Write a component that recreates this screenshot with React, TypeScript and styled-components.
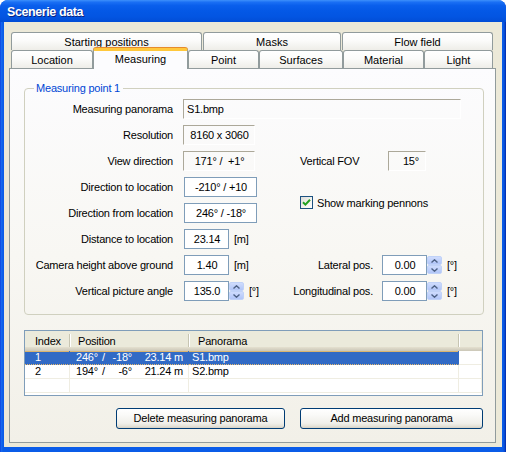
import React from "react";
import styled, { createGlobalStyle, css } from "styled-components";

const Global = createGlobalStyle`
  html, body { margin: 0; padding: 0; background: #ffffff; }
  body {
    font-family: "Liberation Sans", Arial, sans-serif;
    font-size: 11px;
    letter-spacing: -0.2px;
    color: #000;
  }
  * { box-sizing: border-box; }
`;

const Window = styled.div`
  width: 506px;
  height: 452px;
  display: flex;
  flex-direction: column;
  border-radius: 8px 8px 0 0;
  overflow: hidden;
  background: linear-gradient(
    to right,
    #0831d9 0,
    #1a6cf0 1px,
    #0a5ce8 3px,
    #0a5ce8 calc(100% - 3px),
    #0645cc calc(100% - 1px),
    #0020a0 100%
  );
`;

const TitleBar = styled.div`
  flex: none;
  height: 22px;
  display: flex;
  align-items: center;
  padding: 1px 0 0 7px;
  background: linear-gradient(
    180deg,
    #3d90fb 0%,
    #1a6ff4 10%,
    #0a5fec 25%,
    #0458e6 50%,
    #0355e2 75%,
    #024dd6 100%
  );
`;

const Title = styled.span`
  color: #ffffff;
  font-weight: bold;
  font-size: 12.5px;
  letter-spacing: -0.4px;
  text-shadow: 1px 1px 0 #0a2480;
`;

const Body = styled.div`
  flex: 1;
  margin: 0 4px 5px 4px;
  background: #ece9d8;
  padding: 10px 6px 4px 5px;
  display: flex;
  flex-direction: column;
`;

const TabStrip = styled.div`
  display: flex;
  flex-direction: column;
  padding-left: 2px;
`;

const TabRow = styled.div<{ $gap: number }>`
  display: flex;
  gap: ${(p) => p.$gap}px;
  height: 18px;
  align-items: flex-start;
`;

const Tab = styled.div<{ $w: number; $active?: boolean }>`
  flex: none;
  width: ${(p) => p.$w}px;
  height: 18px;
  display: flex;
  align-items: center;
  justify-content: center;
  border: 1px solid #919b9c;
  border-bottom: none;
  border-radius: 3px 3px 0 0;
  background: linear-gradient(180deg, #ffffff 0%, #fbfbfa 45%, #eeede8 100%);
  white-space: nowrap;
  letter-spacing: 0;
  ${(p) =>
    p.$active &&
    css`
      position: relative;
      z-index: 1;
      height: 21px;
      margin-top: -2px;
      padding-bottom: 3px;
      border-top: 3px solid #ffc83c;
      box-shadow: 0 -1px 0 #e68b2c;
      background: #fcfcfe;
    `}
`;

const Panel = styled.div`
  flex: 1;
  display: flex;
  flex-direction: column;
  border: 1px solid #919b9c;
  background: linear-gradient(180deg, #fcfcfe 0%, #f8f7f3 50%, #f2f0e8 100%);
  padding: 12px 11px 12px 14px;
`;

const Group = styled.fieldset`
  margin: 0;
  padding: 0 0 13px 0;
  min-width: 0;
  border: 1px solid #d0d0bf;
  border-radius: 4px;
`;

const Legend = styled.legend`
  margin-left: 9px;
  padding: 0 3px 0 2px;
  line-height: 14px;
  color: #0046d5;
`;

const FormGrid = styled.div`
  display: grid;
  grid-template-columns: 148px 97px 1fr;
  grid-auto-rows: 20px;
  column-gap: 10px;
  row-gap: 6px;
  padding-top: 4px;
`;

const Label = styled.div`
  display: flex;
  align-items: center;
  justify-content: flex-end;
  white-space: nowrap;
`;

const Cell = styled.div<{ $span?: number; $indent?: number }>`
  display: flex;
  align-items: center;
  white-space: nowrap;
  min-width: 0;
  ${(p) => p.$span && css`grid-column: span ${p.$span};`}
  padding-left: ${(p) => p.$indent ?? 0}px;
`;

const CheckCell = styled.label`
  grid-row: span 2;
  align-self: end;
  display: flex;
  align-items: center;
  gap: 4px;
  margin: 0 0 14px 10px;
  white-space: nowrap;
`;

const SideLabel = styled.span<{ $w: number; $right?: boolean }>`
  flex: none;
  width: ${(p) => p.$w}px;
  text-align: ${(p) => (p.$right ? "right" : "left")};
  margin-right: ${(p) => (p.$right ? 8 : 0)}px;
  white-space: nowrap;
`;

type Align = "left" | "center" | "right";

const Field = styled.div<{ $w: number; $kind: "ro" | "edit"; $align?: Align }>`
  flex: none;
  width: ${(p) => p.$w}px;
  height: 20px;
  display: flex;
  align-items: center;
  justify-content: ${(p) =>
    p.$align === "left" ? "flex-start" : p.$align === "right" ? "flex-end" : "center"};
  padding: 0 ${(p) => (p.$align === "right" ? 6 : 2)}px 0 3px;
  white-space: pre;
  ${(p) =>
    p.$kind === "edit"
      ? css`
          margin-left: 1px;
          border: 1px solid #7f9db9;
          background: #ffffff;
        `
      : css`
          border: 1px solid;
          border-color: #aca899 #ffffff #ffffff #aca899;
          background: transparent;
        `}
`;

const Unit = styled.span`
  margin-left: 5px;
`;

const SpinBox = styled.div`
  flex: none;
  width: 15px;
  height: 20px;
  display: flex;
  flex-direction: column;
  padding: 1px 0;
`;

const SpinHalf = styled.div`
  flex: 1;
  display: flex;
  align-items: center;
  justify-content: center;
  border-radius: 2px;
  background: linear-gradient(180deg, #cfdcfd 0%, #bccefa 60%, #b1c5f7 100%);
  border: 1px solid #c0d2f8;
`;

const Arrow = ({ up }: { up?: boolean }) => (
  <svg width="7" height="4" viewBox="0 0 7 4">
    <polyline
      points={up ? "0.5,3.5 3.5,0.8 6.5,3.5" : "0.5,0.5 3.5,3.2 6.5,0.5"}
      fill="none"
      stroke="#4d6185"
      strokeWidth="1.4"
    />
  </svg>
);

const Spinner = () => (
  <SpinBox>
    <SpinHalf>
      <Arrow up />
    </SpinHalf>
    <SpinHalf>
      <Arrow />
    </SpinHalf>
  </SpinBox>
);

const CheckBox = styled.span`
  flex: none;
  width: 13px;
  height: 13px;
  display: flex;
  align-items: center;
  justify-content: center;
  border: 1px solid #1c5180;
  background: linear-gradient(135deg, #dcdcd7 0%, #f4f4f0 60%, #ffffff 100%);
`;

const CheckMark = () => (
  <svg width="9" height="9" viewBox="0 0 9 9">
    <polyline
      points="1,4.2 3.4,6.6 8,1.8"
      fill="none"
      stroke="#21a121"
      strokeWidth="2"
    />
  </svg>
);

const COLS = "45px 119px 270px 1fr";

const List = styled.div`
  margin-top: 15px;
  margin-right: 1px;
  height: 66px;
  border: 1px solid #7f9db9;
  background: #ffffff;
`;

const HeaderRow = styled.div`
  display: grid;
  grid-template-columns: ${COLS};
  height: 20px;
  background: linear-gradient(
    180deg,
    #ebeadb 0%,
    #ebeadb 82%,
    #e2decd 82%,
    #d6d2c2 91%,
    #cbc7b8 100%
  );
`;

const HeaderCell = styled.div<{ $pad: number; $sep?: boolean }>`
  position: relative;
  display: flex;
  align-items: center;
  padding-left: ${(p) => p.$pad}px;
  padding-bottom: 1px;
  white-space: nowrap;
  ${(p) =>
    p.$sep &&
    css`
      &::after {
        content: "";
        position: absolute;
        right: 0;
        top: 3px;
        bottom: 4px;
        width: 1px;
        background: #c7c5b2;
        box-shadow: 1px 0 0 #ffffff;
      }
    `}
`;

const DataRow = styled.div<{ $sel?: boolean }>`
  display: grid;
  grid-template-columns: ${COLS};
  height: 14px;
`;

const DataCell = styled.div<{ $pad: number; $sel?: boolean }>`
  display: flex;
  align-items: center;
  padding-left: ${(p) => p.$pad}px;
  padding-right: 5px;
  white-space: pre;
  border-right: 1px solid #efede2;
  border-bottom: 1px solid #efede2;
  line-height: 13px;
  ${(p) =>
    p.$sel &&
    css`
      background: #316ac5;
      color: #ffffff;
      border-right-color: #316ac5;
      border-bottom: 1px dotted #e7b96e;
      box-shadow: inset 0 1px 0 #d9b470;
    `}
`;

const Az = styled.span`
  width: 26px;
  flex: none;
`;
const Slash = styled.span`
  width: 6px;
  flex: none;
`;
const El = styled.span`
  width: 24px;
  flex: none;
  text-align: right;
`;
const Dist = styled.span`
  flex: 1;
  text-align: right;
`;

const ButtonRow = styled.div`
  display: flex;
  justify-content: flex-end;
  gap: 15px;
  margin: 12px 1px 0 0;
`;

const Button = styled.button<{ $w: number }>`
  width: ${(p) => p.$w}px;
  height: 21px;
  padding: 0 0 1px 0;
  font: inherit;
  letter-spacing: inherit;
  color: #000;
  border: 1px solid #003c74;
  border-radius: 3px;
  background: linear-gradient(
    180deg,
    #ffffff 0%,
    #fafaf8 30%,
    #f0efea 75%,
    #e5e2d8 90%,
    #d6d0c5 100%
  );
`;

type Row = {
  index: string;
  az: string;
  el: string;
  dist: string;
  pano: string;
  sel?: boolean;
};

const rows: Row[] = [
  { index: "1", az: "246°", el: "-18°", dist: "23.14 m", pano: "S1.bmp", sel: true },
  { index: "2", az: "194°", el: "-6°", dist: "21.24 m", pano: "S2.bmp" },
  { index: "", az: "", el: "", dist: "", pano: "" },
];

const backTabs = [
  { label: "Starting positions", w: 191 },
  { label: "Masks", w: 138 },
  { label: "Flow field", w: 151 },
];

const frontTabs = [
  { label: "Location", w: 82 },
  { label: "Measuring", w: 95, active: true },
  { label: "Point", w: 71 },
  { label: "Surfaces", w: 84 },
  { label: "Material", w: 81 },
  { label: "Light", w: 69 },
];

export default function App() {
  return (
    <>
      <Global />
      <Window>
        <TitleBar>
          <Title>Scenerie data</Title>
        </TitleBar>
        <Body>
          <TabStrip>
            <TabRow $gap={1}>
              {backTabs.map((t) => (
                <Tab key={t.label} $w={t.w}>
                  {t.label}
                </Tab>
              ))}
            </TabRow>
            <TabRow $gap={0}>
              {frontTabs.map((t) => (
                <Tab key={t.label} $w={t.w} $active={t.active}>
                  {t.label}
                </Tab>
              ))}
            </TabRow>
          </TabStrip>
          <Panel>
            <Group>
              <Legend>Measuring point 1</Legend>
              <FormGrid>
                <Label>Measuring panorama</Label>
                <Cell $span={2}>
                  <Field $w={278} $kind="ro" $align="left">
                    S1.bmp
                  </Field>
                </Cell>

                <Label>Resolution</Label>
                <Cell>
                  <Field $w={72} $kind="ro">
                    8160 x 3060
                  </Field>
                </Cell>
                <Cell />

                <Label>View direction</Label>
                <Cell>
                  <Field $w={72} $kind="ro">
                    {"171° /  +1°"}
                  </Field>
                </Cell>
                <Cell $indent={10}>
                  <SideLabel $w={88}>Vertical FOV</SideLabel>
                  <Field $w={38} $kind="ro" $align="right">
                    15°
                  </Field>
                </Cell>

                <Label>Direction to location</Label>
                <Cell>
                  <Field $w={73} $kind="edit">
                    {"-210° / +10"}
                  </Field>
                </Cell>
                <CheckCell>
                  <CheckBox>
                    <CheckMark />
                  </CheckBox>
                  Show marking pennons
                </CheckCell>

                <Label>Direction from location</Label>
                <Cell>
                  <Field $w={73} $kind="edit">
                    {"246° / -18°"}
                  </Field>
                </Cell>

                <Label>Distance to location</Label>
                <Cell>
                  <Field $w={45} $kind="edit">
                    23.14
                  </Field>
                  <Unit>[m]</Unit>
                </Cell>
                <Cell />

                <Label>Camera height above ground</Label>
                <Cell>
                  <Field $w={45} $kind="edit">
                    1.40
                  </Field>
                  <Unit>[m]</Unit>
                </Cell>
                <Cell>
                  <SideLabel $w={83} $right>
                    Lateral pos.
                  </SideLabel>
                  <Field $w={45} $kind="edit">
                    0.00
                  </Field>
                  <Spinner />
                  <Unit>[°]</Unit>
                </Cell>

                <Label>Vertical picture angle</Label>
                <Cell>
                  <Field $w={45} $kind="edit">
                    135.0
                  </Field>
                  <Spinner />
                  <Unit>[°]</Unit>
                </Cell>
                <Cell>
                  <SideLabel $w={83} $right>
                    Longitudinal pos.
                  </SideLabel>
                  <Field $w={45} $kind="edit">
                    0.00
                  </Field>
                  <Spinner />
                  <Unit>[°]</Unit>
                </Cell>
              </FormGrid>
            </Group>

            <List>
              <HeaderRow>
                <HeaderCell $pad={10} $sep>
                  Index
                </HeaderCell>
                <HeaderCell $pad={8} $sep>
                  Position
                </HeaderCell>
                <HeaderCell $pad={9} $sep>
                  Panorama
                </HeaderCell>
                <HeaderCell $pad={0} />
              </HeaderRow>
              {rows.map((r, i) => (
                <DataRow key={i}>
                  <DataCell $pad={10} $sel={r.sel}>
                    {r.index}
                  </DataCell>
                  <DataCell $pad={6} $sel={r.sel}>
                    {r.az && (
                      <>
                        <Az>{r.az}</Az>
                        <Slash>/</Slash>
                        <El>{r.el}</El>
                        <Dist>{r.dist}</Dist>
                      </>
                    )}
                  </DataCell>
                  <DataCell $pad={3} $sel={r.sel}>
                    {r.pano}
                  </DataCell>
                  <DataCell $pad={0} />
                </DataRow>
              ))}
            </List>

            <ButtonRow>
              <Button $w={169}>Delete measuring panorama</Button>
              <Button $w={183}>Add measuring panorama</Button>
            </ButtonRow>
          </Panel>
        </Body>
      </Window>
    </>
  );
}
